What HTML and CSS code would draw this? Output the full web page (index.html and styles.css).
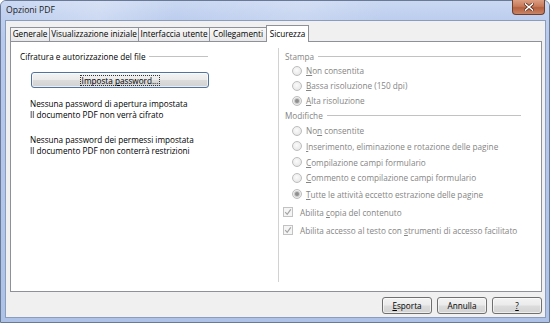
FILE: index.html
```html
<!DOCTYPE html>
<html lang="it">
<head>
<meta charset="utf-8">
<title>Opzioni PDF</title>
<link rel="stylesheet" href="styles.css">
</head>
<body>
<div class="window">
  <div class="titlebar">
    <span class="title">Opzioni PDF</span>
    <div class="close">
      <svg width="10" height="8" viewBox="0 0 10 8"><path d="M1.5 1 L8.5 7 M8.5 1 L1.5 7" stroke="#5a2a1c" stroke-width="3" stroke-linecap="square"/><path d="M1.5 1 L8.5 7 M8.5 1 L1.5 7" stroke="#fff" stroke-width="1.6" stroke-linecap="square"/></svg>
    </div>
  </div>
  <div class="client">
    <div class="tabs">
      <div class="tab w-gen">Generale</div>
      <div class="tab w-vis">Visualizzazione iniziale</div>
      <div class="tab w-int">Interfaccia utente</div>
      <div class="tab w-col">Collegamenti</div>
      <div class="tab tab-active w-sic">Sicurezza</div>
    </div>
    <div class="panel">
      <div class="col-left">
        <div class="group-head head-left"><span>Cifratura e autorizzazione del file</span><i class="rule"></i></div>
        <div class="btn btn-wide"><span class="focus">Imposta <u>p</u>assword...</span></div>
        <div class="info">Nessuna password di apertura impostata<br>Il documento PDF non verrà cifrato</div>
        <div class="info info-2">Nessuna password dei permessi impostata<br>Il documento PDF non conterrà restrizioni</div>
      </div>
      <div class="sep"></div>
      <div class="col-right">
        <div class="group-head head-right"><span>Stampa</span><i class="rule"></i></div>
        <div class="row radio-row"><i class="radio"></i><span><u>N</u>on consentita</span></div>
        <div class="row radio-row"><i class="radio"></i><span><u>B</u>assa risoluzione (150 dpi)</span></div>
        <div class="row radio-row"><i class="radio checked"></i><span><u>A</u>lta risoluzione</span></div>
        <div class="group-head head-right row"><span>Modifiche</span><i class="rule"></i></div>
        <div class="row radio-row"><i class="radio"></i><span>No<u>n</u> consentite</span></div>
        <div class="row h16 radio-row"><i class="radio"></i><span><u>I</u>nserimento, eliminazione e rotazione delle pagine</span></div>
        <div class="row h16 radio-row"><i class="radio"></i><span><u>C</u>ompilazione campi formulario</span></div>
        <div class="row radio-row"><i class="radio"></i><span><u>C</u>ommento e compilazione campi formulario</span></div>
        <div class="row h18 radio-row"><i class="radio checked"></i><span><u>T</u>utte le attività eccetto estrazione delle pagine</span></div>
        <div class="row h18 check-row"><i class="check"><svg width="8" height="8" viewBox="0 0 8 8"><path d="M1.2 4.2 L3.2 6.3 L6.8 1.3" fill="none" stroke="#a4a4a4" stroke-width="1.2"/></svg></i><span>Abilita <u>c</u>opia del contenuto</span></div>
        <div class="row h18 check-row"><i class="check"><svg width="8" height="8" viewBox="0 0 8 8"><path d="M1.2 4.2 L3.2 6.3 L6.8 1.3" fill="none" stroke="#a4a4a4" stroke-width="1.2"/></svg></i><span>Abilita accesso al testo con <u>s</u>trumenti di accesso facilitato</span></div>
      </div>
    </div>
    <div class="buttons">
      <div class="btn btn-small"><span><u>E</u>sporta</span></div>
      <div class="btn btn-small"><span>Annulla</span></div>
      <div class="btn btn-small"><span><u>?</u></span></div>
    </div>
  </div>
</div>
</body>
</html>
```
FILE: styles.css
```css
* { box-sizing: border-box; }
html, body { margin: 0; padding: 0; }
body {
  width: 550px;
  height: 323px;
  overflow: hidden;
  background: #ffffff;
  font-family: "Open Sans", "Noto Sans", sans-serif;
  font-size: 8.2px;
  color: #000;
}
u { text-decoration: underline; text-underline-offset: 1px; }

.window {
  width: 550px;
  height: 323px;
  display: flex;
  flex-direction: column;
  border: 1px solid #6a7a96;
  border-radius: 6px 6px 0 0;
  background: linear-gradient(to bottom, #c3d2ef 0px, #b7c9ec 40px, #aec2e8 100%);
}

.titlebar {
  height: 19px;
  display: flex;
  align-items: flex-start;
  background:
    linear-gradient(100deg, rgba(255,255,255,0) 0%, rgba(255,255,255,0.25) 18%, rgba(255,255,255,0) 32%, rgba(255,255,255,0.18) 55%, rgba(255,255,255,0) 70%),
    linear-gradient(to bottom, #cad8f2, #bccdee);
  border-radius: 5px 5px 0 0;
}
.title {
  margin: 4px 0 0 5px;
  font-size: 8.6px;
  line-height: 11px;
  color: #1a1a1a;
}
.close {
  margin-left: auto;
  margin-right: 4px;
  margin-top: -1px;
  width: 33px;
  height: 15px;
  border: 1px solid #6e3e2c;
  border-top: none;
  border-radius: 0 0 4px 4px;
  background: linear-gradient(to bottom, #dc9e82 0%, #c77a5a 45%, #b5603f 55%, #c98466 100%);
  display: flex;
  align-items: center;
  justify-content: center;
}

.client {
  margin: 0 3px 4px 4px;
  flex: 1;
  border: 1px solid #8b9dbf;
  background: #f0f0f0;
  padding: 4px 3px 0 4px;
  display: flex;
  flex-direction: column;
}

.tabs {
  height: 16px;
  display: flex;
  align-items: flex-end;
  position: relative;
  z-index: 2;
}
.tab {
  height: 14px;
  margin-left: -1px;
  border: 1px solid #8e9199;
  border-bottom: none;
  background: linear-gradient(to bottom, #f6f6f6, #e8e8e8);
  line-height: 12px;
  text-align: center;
  white-space: nowrap;
}
.tab:first-child { margin-left: 0; }
.tab-active {
  height: 17px;
  margin-bottom: -1px;
  background: #fff;
  line-height: 15px;
}
.w-gen { width: 40px; }
.w-vis { width: 90px; }
.w-int { width: 72px; }
.w-col { width: 58px; }
.w-sic { width: 43px; }

.panel {
  height: 251px;
  border: 1px solid #8e9199;
  background: #fff;
  display: flex;
}

.col-left {
  width: 267px;
  padding: 8px 0 0 9px;
}
.sep {
  width: 1px;
  margin: 6px 0 9px;
  background: #d2d2d2;
}
.col-right {
  width: 261px;
  padding: 8px 0 0 4px;
  color: #858585;
}

.group-head {
  height: 13px;
  line-height: 13px;
  display: flex;
  align-items: center;
  white-space: nowrap;
}
.group-head .rule {
  flex: 1;
  height: 1px;
  background: #c2c2c2;
  margin-left: 4px;
}
.head-left { width: 188px; }
.head-right { width: 236px; margin-left: 2px; }

.row {
  height: 15px;
  display: flex;
  align-items: center;
  white-space: nowrap;
}
.group-head.row { height: 15px; }
.h16 { height: 16px; }
.h18 { height: 18px; }
.radio-row { padding-left: 9px; }
.radio {
  width: 10px;
  height: 10px;
  border-radius: 50%;
  border: 1px solid #bdbdbd;
  background: radial-gradient(circle at 45% 40%, #fbfbfb 0%, #ececec 60%, #dedede 100%);
  margin-right: 4px;
  flex: none;
  display: flex;
  align-items: center;
  justify-content: center;
}
.radio.checked::after {
  content: "";
  width: 4px;
  height: 4px;
  border-radius: 50%;
  background: #8e8e8e;
  box-shadow: 0 0 0 1px #c9c9c9;
}
.check-row { padding-left: 0; }
.check {
  width: 10px;
  height: 10px;
  border: 1px solid #c2c2c2;
  background: #f5f5f5;
  margin-right: 7px;
  flex: none;
  display: flex;
  align-items: center;
  justify-content: center;
}

.btn {
  border: 1px solid #707070;
  border-radius: 3px;
  background: linear-gradient(to bottom, #f3f3f3 0%, #ebebeb 48%, #dcdcdc 52%, #d2d2d2 100%);
  box-shadow: inset 0 0 0 1px rgba(255,255,255,0.6);
  display: flex;
  align-items: center;
  justify-content: center;
  white-space: nowrap;
}
.btn-wide {
  width: 178px;
  height: 16px;
  margin: 9px 0 0 11px;
  border-color: #4f74a0;
}
.focus {
  border: 1px dotted #333;
  padding: 0 1px;
  line-height: 9px;
}
.info {
  margin: 10px 0 0 10px;
  line-height: 11px;
}
.info-2 { margin-top: 14px; }

.buttons {
  margin-top: 5px;
  height: 17px;
  display: flex;
  justify-content: flex-end;
  gap: 5px;
}
.btn-small {
  width: 50px;
  height: 17px;
}
```
